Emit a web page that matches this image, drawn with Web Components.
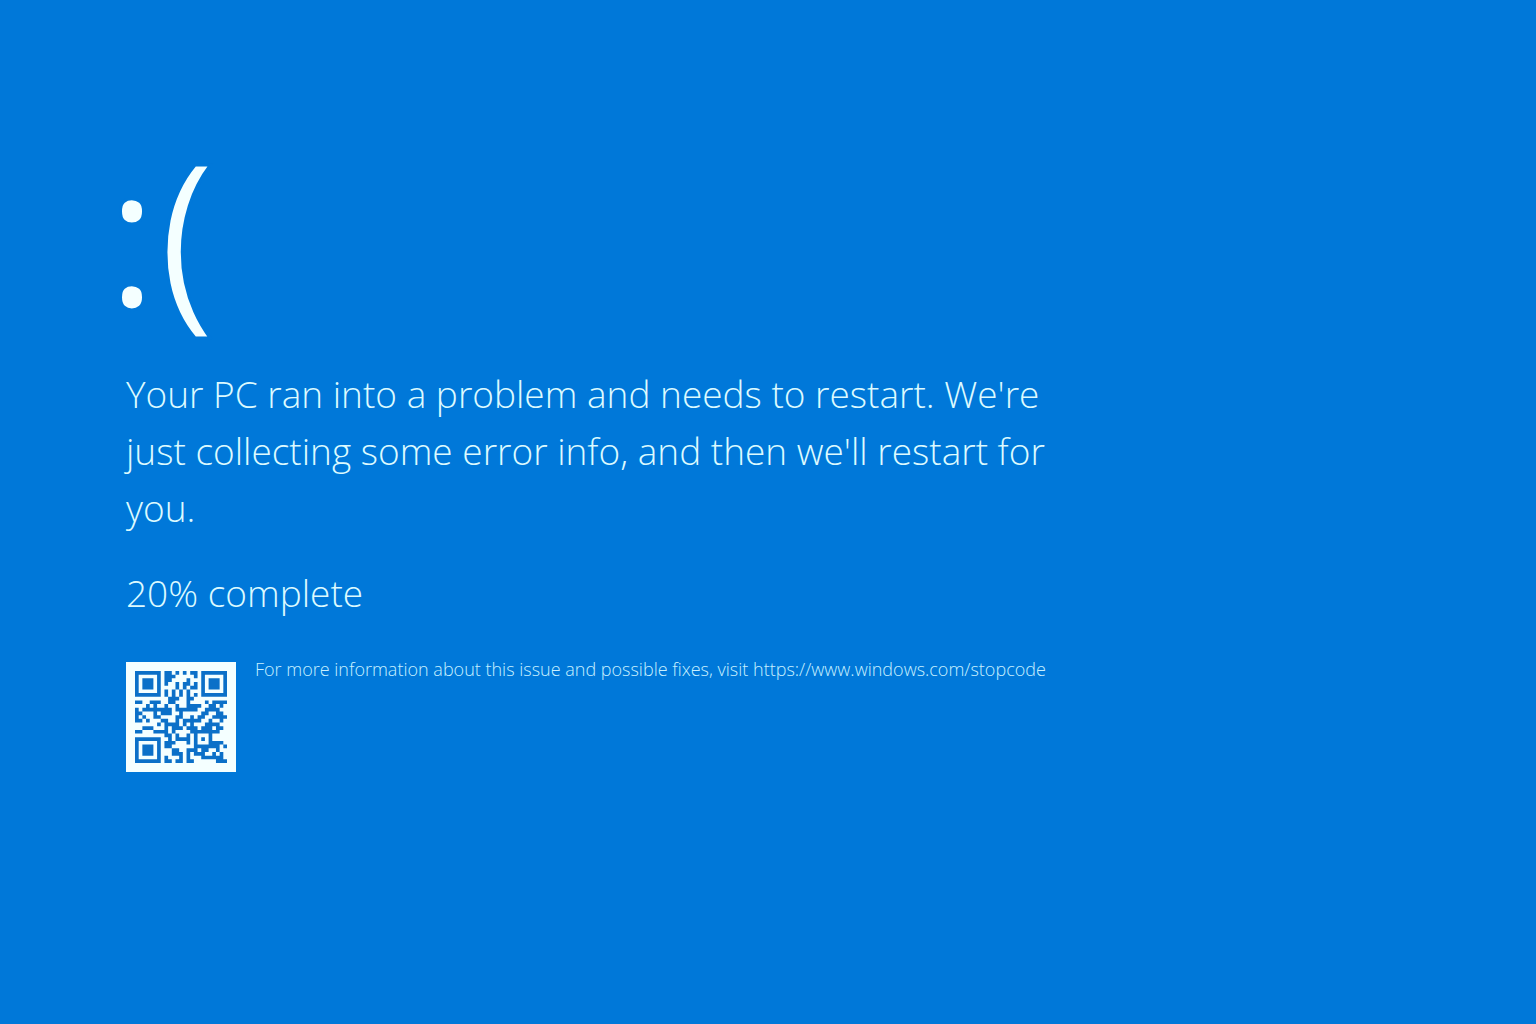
<!DOCTYPE html>
<html lang="en">
<head>
<meta charset="utf-8">
<meta name="viewport" content="width=device-width, initial-scale=1">
<title>Stop screen</title>
<style>
  html, body { margin: 0; min-height: 100%; background: #0078d9; }
  body { --screen: #0078d9; font-family: "Open Sans", "Noto Sans", sans-serif; font-weight: 300; color: #dcfaff; }
</style>
</head>
<body>
<stop-screen>
  <sad-face slot="face">:(</sad-face>
  <stop-message slot="message">Your PC ran into a problem and needs to restart. We're just collecting some error info, and then we'll restart for you.</stop-message>
  <stop-message slot="progress">20% complete</stop-message>
  <support-info slot="support" code="https://www.windows.com/stopcode">For more information about this issue and possible fixes, visit https://www.windows.com/stopcode</support-info>
</stop-screen>

<script>
const define = (name, html) => customElements.define(name, class extends HTMLElement {
  constructor() {
    super();
    this.attachShadow({ mode: 'open' }).innerHTML = html;
  }
});

define('stop-screen', `
  <style>
    :host { display: block; min-height: 100vh; box-sizing: border-box; padding: 107px 126px; }
    main { display: flex; flex-direction: column; max-width: 928px; }
    .message { margin-top: 12px; }
    .progress { margin-top: 28px; }
    .support { margin-top: 41px; }
  </style>
  <main>
    <slot name="face"></slot>
    <div class="message"><slot name="message"></slot></div>
    <div class="progress"><slot name="progress"></slot></div>
    <div class="support"><slot name="support"></slot></div>
  </main>`);

/* The outline in the screen colour trims the regular weight to a finer stroke. */
define('sad-face', `
  <style>
    :host {
      display: block; margin-left: -20px;
      font-size: 198px; line-height: 246px; font-weight: 400;
      color: #f4ffff; -webkit-text-stroke: 3px var(--screen);
    }
  </style>
  <slot></slot>`);

define('stop-message', `
  <style>
    :host { display: block; font-size: 37px; line-height: 57px; }
    p { margin: 0; }
  </style>
  <p><slot></slot></p>`);

define('support-info', `
  <style>
    :host { display: flex; align-items: flex-start; gap: 19px; font-size: 18px; line-height: 14px; color: #c8f0ff; }
    p { margin: 0; }
  </style>
  <qr-code></qr-code>
  <p><slot></slot></p>`);

/* Version 2-L QR symbol: 25 x 25 modules, 34 data and 10 correction codewords, mask 4. */
function qrModules(text) {
  const size = 25, dataLen = 34, ecLen = 10;
  const bytes = [...new TextEncoder().encode(text)];
  let bits = '0100' + bytes.length.toString(2).padStart(8, '0') +
    bytes.map(b => b.toString(2).padStart(8, '0')).join('') + '0000';
  while (bits.length % 8) bits += '0';
  const data = bits.match(/.{8}/g).map(b => parseInt(b, 2));
  for (let i = 0; data.length < dataLen; i++) data.push(i % 2 ? 17 : 236);

  const mul = (a, b) => {
    let r = 0;
    for (; b; b >>= 1) {
      if (b & 1) r ^= a;
      a <<= 1;
      if (a & 256) a ^= 285;
    }
    return r;
  };
  let gen = [1], root = 1;
  for (let i = 0; i < ecLen; i++) {
    const next = [...gen, 0];
    gen.forEach((g, j) => { next[j + 1] ^= mul(g, root); });
    gen = next;
    root = mul(root, 2);
  }
  const rem = [...data, ...Array(ecLen).fill(0)];
  for (let i = 0; i < dataLen; i++) {
    const k = rem[i];
    gen.forEach((g, j) => { rem[i + j] ^= mul(g, k); });
  }
  const stream = [...data, ...rem.slice(dataLen)].map(b => b.toString(2).padStart(8, '0')).join('');

  const m = Array.from({ length: size }, () => Array(size).fill(null));
  for (let i = 0; i < size; i++) m[6][i] = m[i][6] = i % 2 ? 0 : 1;
  const square = (cr, cc, reach, light) => {
    for (let r = -reach; r <= reach; r++) for (let c = -reach; c <= reach; c++) {
      if (m[cr + r] && cc + c >= 0 && cc + c < size) {
        m[cr + r][cc + c] = light.includes(Math.max(Math.abs(r), Math.abs(c))) ? 0 : 1;
      }
    }
  };
  square(3, 3, 4, [2, 4]);
  square(3, size - 4, 4, [2, 4]);
  square(size - 4, 3, 4, [2, 4]);
  square(18, 18, 2, [1]);

  const format = [...'110011000101111'].map(Number);
  for (let i = 0; i < 15; i++) {
    const v = format[i];
    if (i < 6) m[8][i] = v;
    else if (i < 8) m[8][i + 1] = v;
    else if (i === 8) m[7][8] = v;
    else m[14 - i][8] = v;
    if (i < 7) m[size - 1 - i][8] = v;
    else m[8][size - 15 + i] = v;
  }
  m[size - 8][8] = 1;

  let n = 0, up = true;
  for (let right = size - 1; right > 0; right -= 2) {
    if (right === 6) right = 5;
    for (let i = 0; i < size; i++) {
      const r = up ? size - 1 - i : i;
      for (const c of [right, right - 1]) {
        if (m[r][c] !== null) continue;
        const flip = (Math.floor(r / 2) + Math.floor(c / 3)) % 2 === 0 ? 1 : 0;
        m[r][c] = Number(stream[n++] || 0) ^ flip;
      }
    }
    up = !up;
  }
  return m;
}

customElements.define('qr-code', class extends HTMLElement {
  constructor() {
    super();
    this.attachShadow({ mode: 'open' }).innerHTML = `
      <style>
        :host { display: block; flex: none; padding: 9px; background: #f4ffff; }
        svg { display: block; width: 92px; height: 92px; }
      </style>
      <svg viewBox="0 0 25 25" role="img" aria-label="QR code"><path fill="#0b70c8"/></svg>`;
  }
  connectedCallback() {
    const host = this.getRootNode().host;
    let d = '';
    qrModules(host.getAttribute('code')).forEach((row, r) => {
      for (let c = 0; c < row.length; c++) {
        if (!row[c]) continue;
        let end = c;
        while (row[end + 1]) end++;
        d += `M${c} ${r}h${end - c + 1}v1H${c}z`;
        c = end;
      }
    });
    this.shadowRoot.querySelector('path').setAttribute('d', d);
  }
});
</script>
</body>
</html>
